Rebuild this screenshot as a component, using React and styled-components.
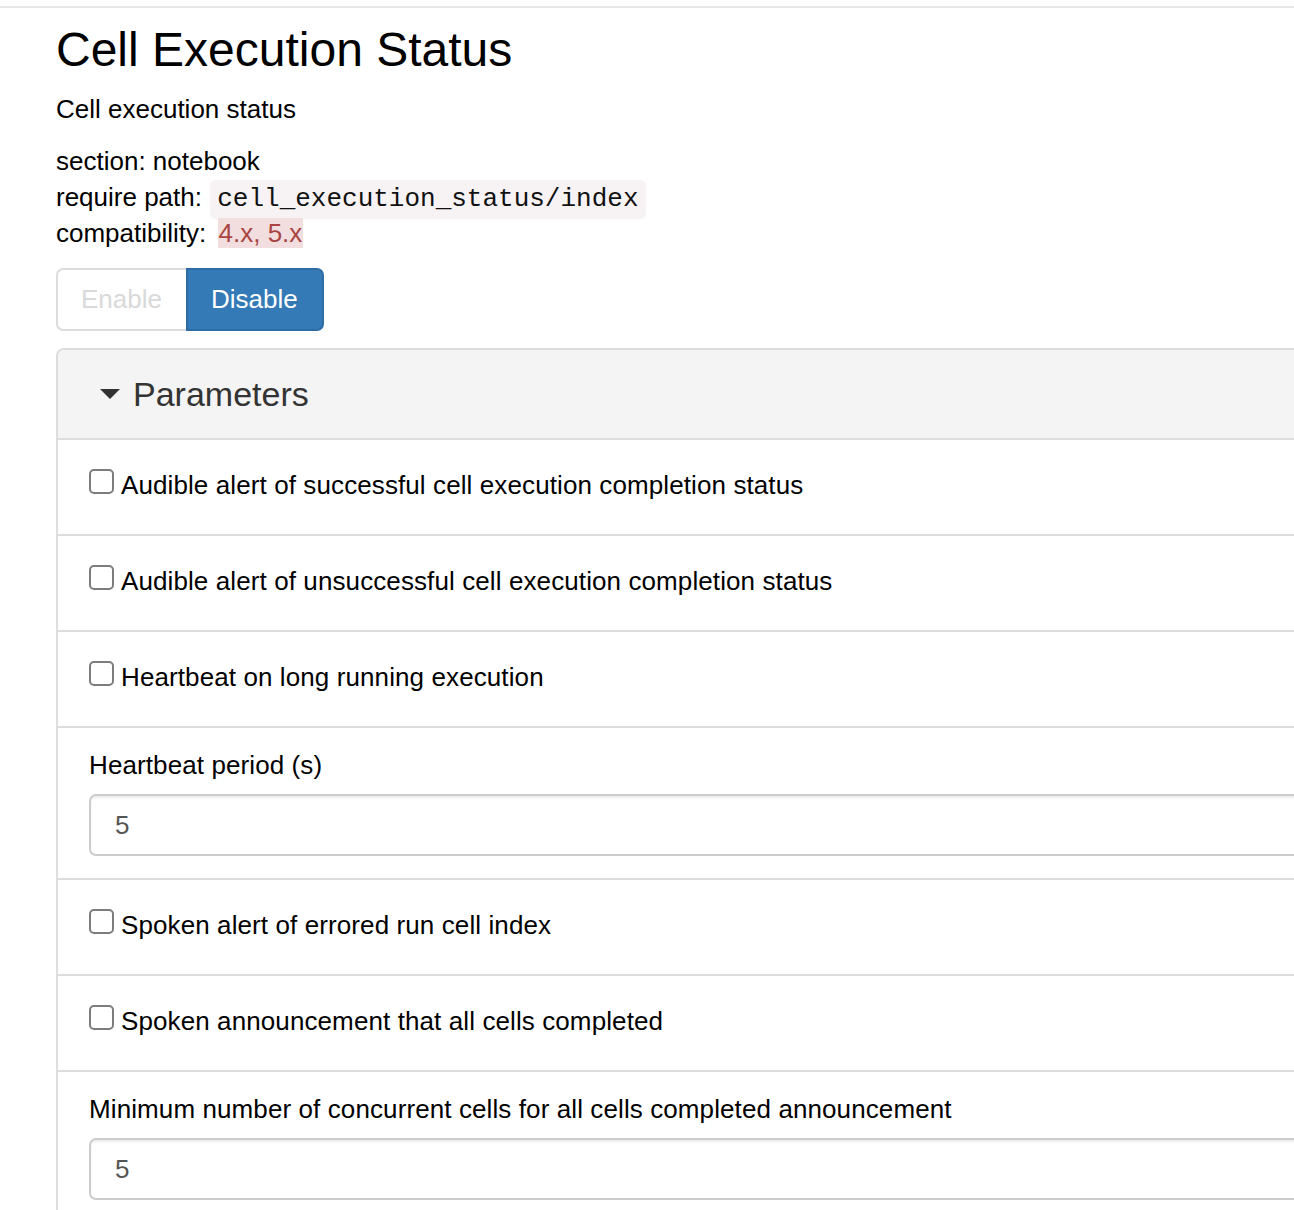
import React from "react";
import styled, { createGlobalStyle } from "styled-components";

const GlobalStyle = createGlobalStyle`
  html, body {
    margin: 0;
    padding: 0;
    overflow: hidden;
    background: #fff;
  }
  body {
    font-family: "Liberation Sans", Arial, Helvetica, sans-serif;
    font-size: 26px;
    line-height: 37px;
    color: #000;
  }
`;

const TopRule = styled.div`
  height: 6px;
  border-bottom: 2px solid #e7e7e7;
`;

const Page = styled.div`
  padding-left: 56px;
`;

const Title = styled.h1`
  margin: 15px 0 15px;
  font-size: 48px;
  line-height: 53px;
  font-weight: 500;
  color: #000;
`;

const Description = styled.p`
  margin: 0 0 15px;
`;

const Meta = styled.div`
  line-height: 36px;
`;

const Code = styled.code`
  font-family: "Liberation Mono", "Courier New", monospace;
  font-size: 26px;
  line-height: 26px;
  padding: 4px 7px 5px;
  margin-left: 1px;
  background: #f7f2f4;
  color: #111;
  border-radius: 6px;
`;

const Compat = styled.span`
  background: #f2dede;
  color: #a94442;
  padding: 0 1px;
  margin-left: 4px;
`;

const ButtonGroup = styled.div`
  display: flex;
  margin-top: 17px;
`;

const ToggleButton = styled.button`
  font-family: inherit;
  font-size: 26px;
  line-height: 37px;
  padding: 11px 24px 11px 23px;
  border: 2px solid ${(p) => (p.$active ? "#2e6da4" : "#dcdcdc")};
  background: ${(p) => (p.$active ? "#337ab7" : "#fff")};
  color: ${(p) => (p.$active ? "#fff" : "#d9d9d9")};
  border-radius: ${(p) => (p.$first ? "7px 0 0 7px" : "0 7px 7px 0")};
  ${(p) => (p.$first ? "border-right: none;" : "")}
  cursor: pointer;
`;

const Panel = styled.div`
  margin-top: 17px;
  width: 1290px;
  border: 2px solid #ddd;
  border-radius: 8px 0 0 0;
`;

const PanelHeading = styled.div`
  display: flex;
  align-items: center;
  gap: 13px;
  height: 90px;
  padding: 1px 0 0 42px;
  box-sizing: border-box;
  background: #f4f4f4;
  border-bottom: 2px solid #ddd;
  border-radius: 6px 0 0 0;
  color: #333;
  font-size: 34px;
  line-height: 37px;
`;

const Caret = styled.span`
  width: 0;
  height: 0;
  border-left: 10px solid transparent;
  border-right: 10px solid transparent;
  border-top: 10px solid #333;
  margin-top: -2px;
`;

const Row = styled.div`
  padding: ${(p) => (p.$field ? "19px 31px 22px" : "27px 31px 30px")};
  letter-spacing: 0.1px;
  & + & {
    border-top: 2px solid #ddd;
  }
`;

const CheckLabel = styled.label`
  display: flex;
  align-items: center;
  gap: 7px;
`;

const Checkbox = styled.input`
  appearance: none;
  margin: 0 0 9px 0;
  width: 25px;
  height: 25px;
  border: 2px solid #7c7c7c;
  border-radius: 5px;
  background: #fff;
  box-sizing: border-box;
`;

const FieldLabel = styled.label`
  display: block;
  margin-bottom: 10px;
`;

const TextInput = styled.input`
  display: block;
  box-sizing: border-box;
  width: 100%;
  height: 62px;
  padding: 0 24px;
  font-family: inherit;
  font-size: 26px;
  color: #555;
  border: 2px solid #ccc;
  border-radius: 7px;
  box-shadow: inset 0 2px 2px rgba(0, 0, 0, 0.075);
  outline: none;
`;

const CheckRow = ({ label }) => (
  <Row>
    <CheckLabel>
      <Checkbox type="checkbox" />
      {label}
    </CheckLabel>
  </Row>
);

const FieldRow = ({ label, value }) => (
  <Row $field>
    <FieldLabel>{label}</FieldLabel>
    <TextInput type="text" defaultValue={value} />
  </Row>
);

const App = () => (
  <>
    <GlobalStyle />
    <TopRule />
    <Page>
      <Title>Cell Execution Status</Title>
      <Description>Cell execution status</Description>
      <Meta>
        <div>section: notebook</div>
        <div>
          require path: <Code>cell_execution_status/index</Code>
        </div>
        <div>
          compatibility: <Compat>4.x, 5.x</Compat>
        </div>
      </Meta>
      <ButtonGroup>
        <ToggleButton $first>Enable</ToggleButton>
        <ToggleButton $active>Disable</ToggleButton>
      </ButtonGroup>
      <Panel>
        <PanelHeading>
          <Caret />
          Parameters
        </PanelHeading>
        <CheckRow label="Audible alert of successful cell execution completion status" />
        <CheckRow label="Audible alert of unsuccessful cell execution completion status" />
        <CheckRow label="Heartbeat on long running execution" />
        <FieldRow label="Heartbeat period (s)" value="5" />
        <CheckRow label="Spoken alert of errored run cell index" />
        <CheckRow label="Spoken announcement that all cells completed" />
        <FieldRow
          label="Minimum number of concurrent cells for all cells completed announcement"
          value="5"
        />
      </Panel>
    </Page>
  </>
);

export default App;
